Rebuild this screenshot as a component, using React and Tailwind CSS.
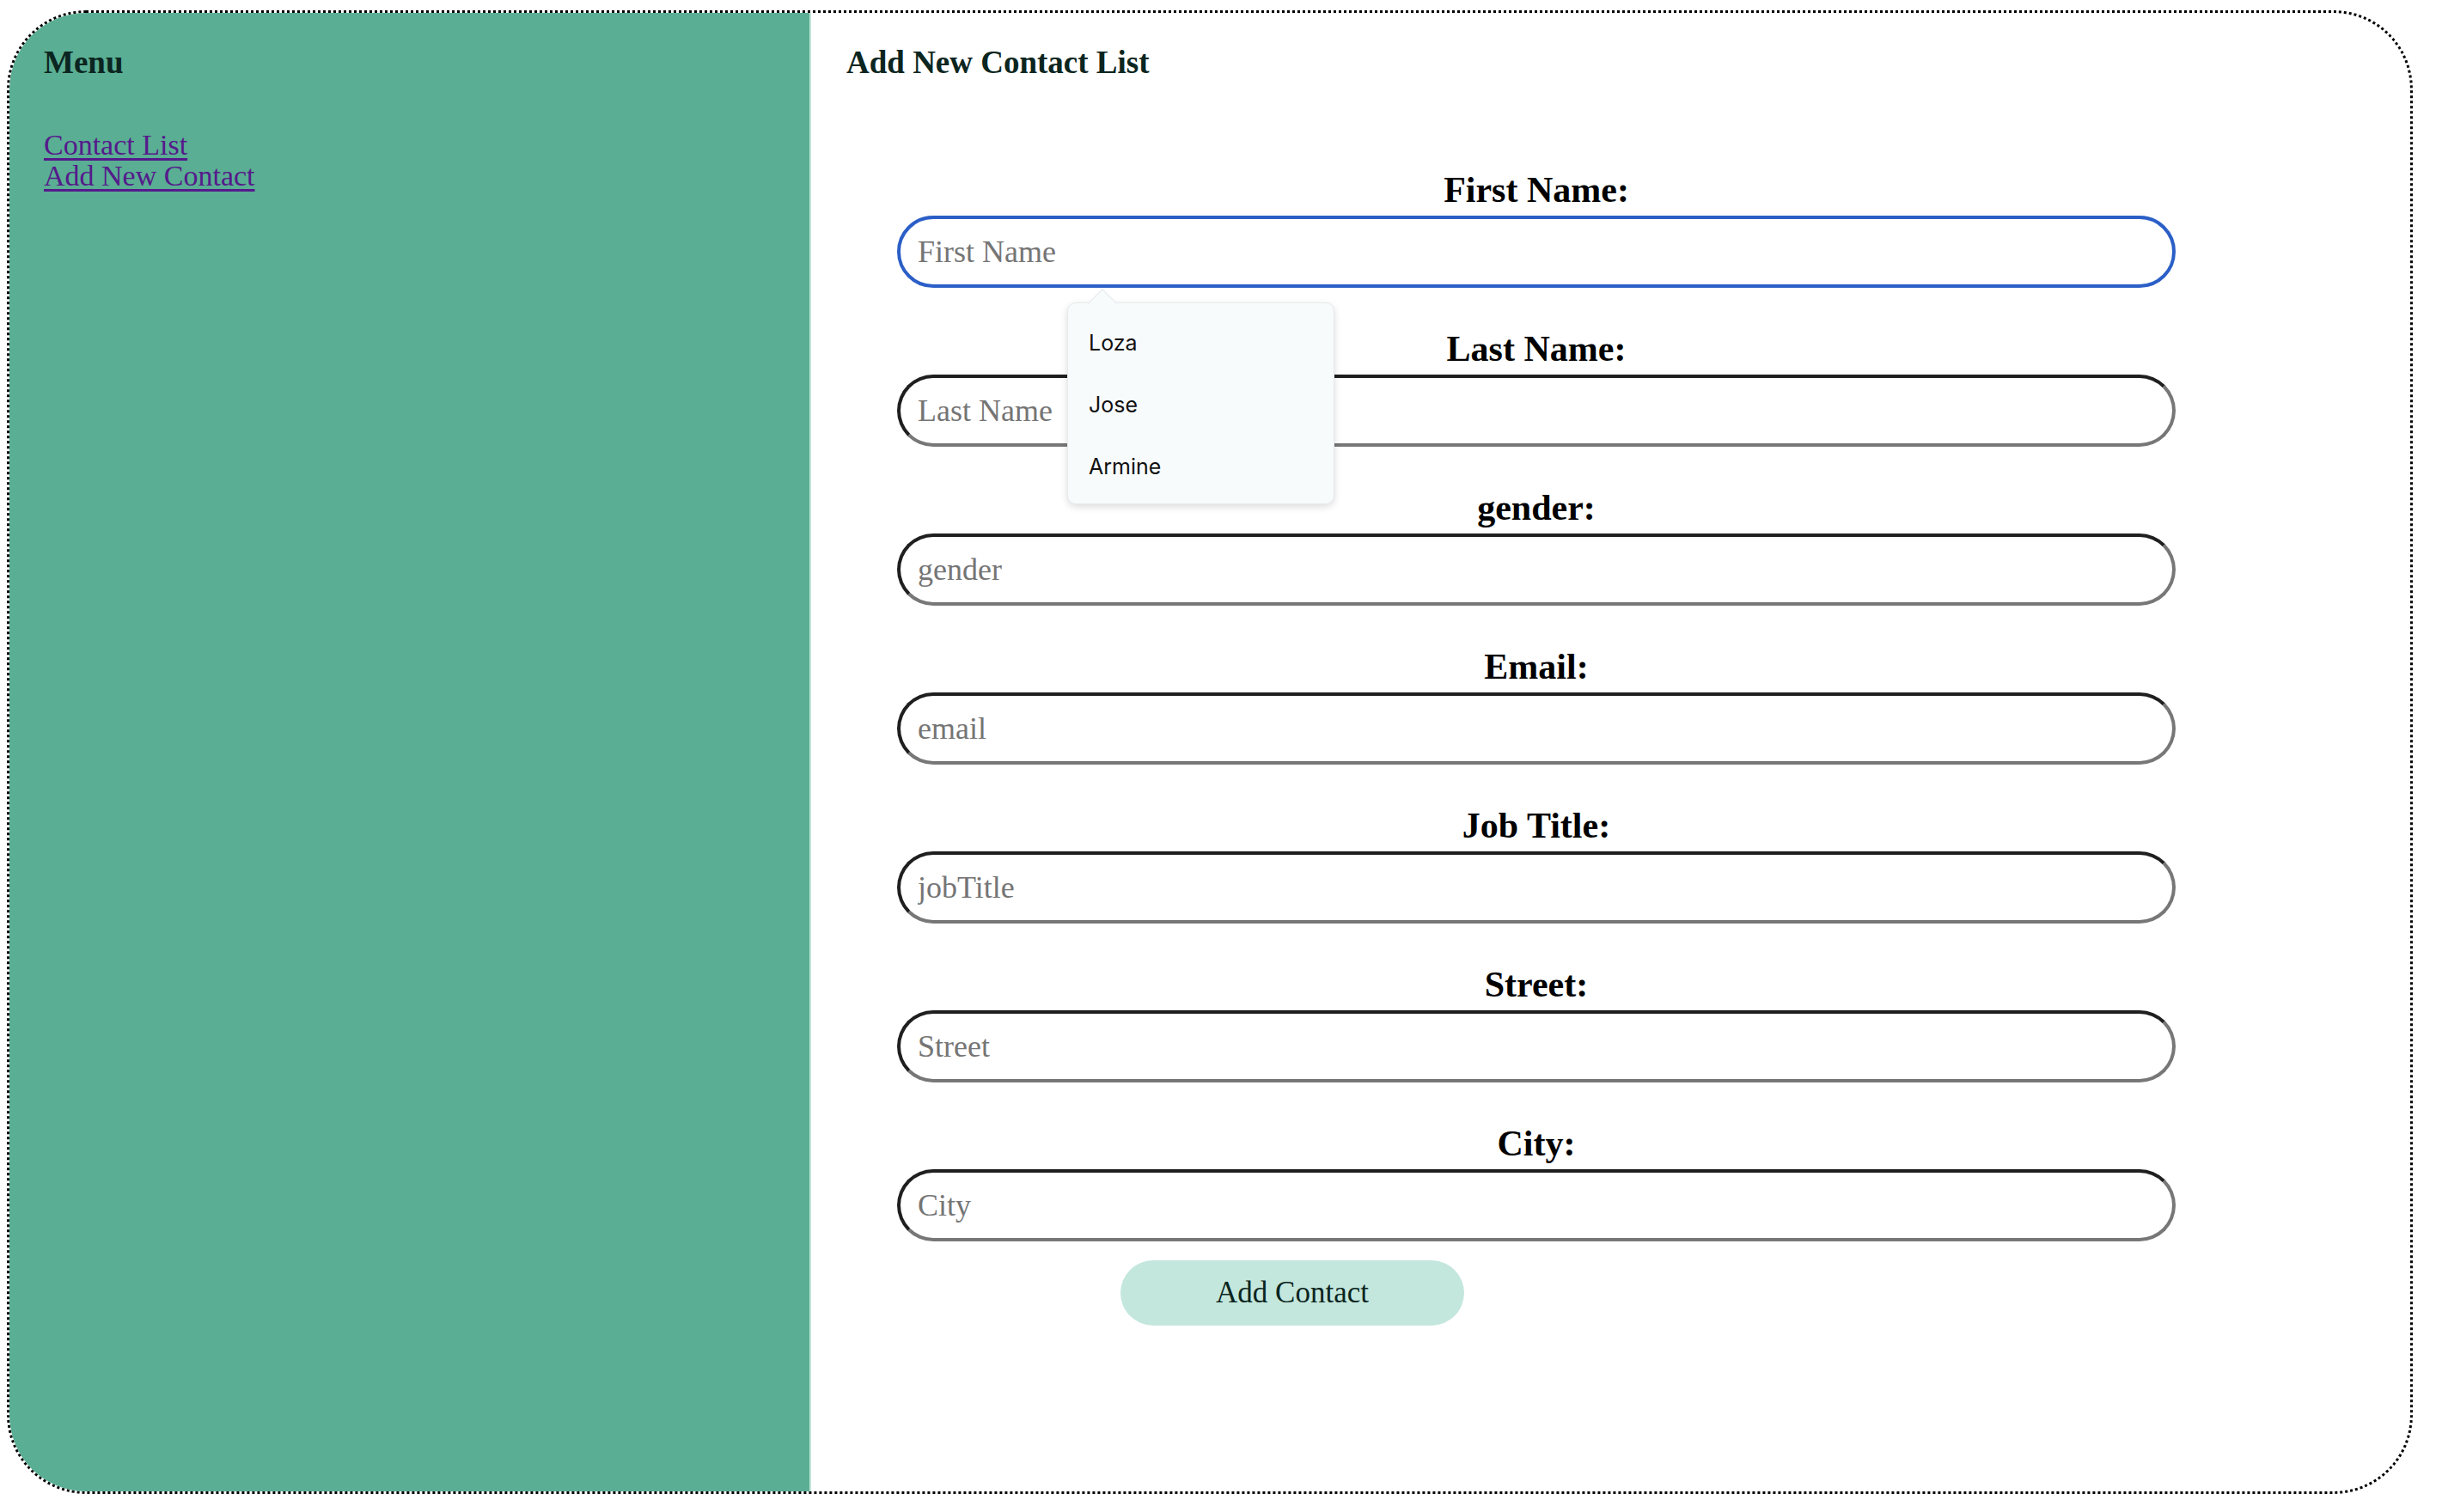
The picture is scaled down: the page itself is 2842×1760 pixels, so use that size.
import React from "react";

const fields = [
  { label: "First Name:", ph: "First Name", focused: true },
  { label: "Last Name:", ph: "Last Name" },
  { label: "gender:", ph: "gender" },
  { label: "Email:", ph: "email" },
  { label: "Job Title:", ph: "jobTitle" },
  { label: "Street:", ph: "Street" },
  { label: "City:", ph: "City" },
];

export default function App() {
  return (
    <div className="bg-white w-[2842px] h-[1760px] pt-[12px] pl-[8px] font-['Liberation_Serif',serif]">
      <div className="w-[2800px] h-[1727px] border-[3px] border-dotted border-black rounded-[92px] overflow-hidden flex">
        {/* Sidebar */}
        <aside className="w-[933px] shrink-0 bg-[#5aae93] border-r-2 border-[#c3e5d9] pl-[40px] pt-[38px]">
          <h3 className="text-[37px] leading-[40px] font-bold text-[#0b2520] m-0">Menu</h3>
          <nav className="mt-[58px] flex flex-col">
            <a href="#" className="text-[34px] leading-[36px] text-[#551a8b] underline decoration-[3px] underline-offset-[4px] w-fit">
              Contact List
            </a>
            <a href="#" className="text-[34px] leading-[36px] text-[#551a8b] underline decoration-[3px] underline-offset-[4px] w-fit">
              Add New Contact
            </a>
          </nav>
        </aside>

        {/* Main */}
        <main className="flex-1 pl-[41px] pt-[38px]">
          <h3 className="text-[37px] leading-[40px] font-bold text-[#0b2520] m-0">Add New Contact List</h3>
          <form className="relative ml-[59px] mt-[106px] w-[1488px] flex flex-col">
            {fields.map((f, i) => (
              <div key={f.label} className={i === 0 ? "flex flex-col" : "flex flex-col mt-[49px]"}>
                <label className="text-center text-[42px] leading-[44px] font-bold text-black">{f.label}</label>
                <input
                  type="text"
                  placeholder={f.ph}
                  className={
                    f.focused
                      ? "mt-[8px] h-[84px] w-full rounded-full border-4 border-[#2b5fc7] bg-white pl-[20px] text-[36px] text-black placeholder:text-[#757575] outline-none font-['Liberation_Serif',serif]"
                      : "mt-[8px] h-[84px] w-full rounded-full border-4 border-t-[#1f1f1f] border-l-[#1f1f1f] border-b-[#777777] border-r-[#777777] bg-white pl-[20px] text-[36px] text-black placeholder:text-[#757575] outline-none font-['Liberation_Serif',serif]"
                  }
                />
              </div>
            ))}
            <button
              type="button"
              className="mt-[22px] ml-[260px] w-[400px] h-[76px] rounded-full bg-[#c4e7dd] text-[35px] text-[#0b2520] font-['Liberation_Serif',serif]"
            >
              Add Contact
            </button>

            {/* Autocomplete popup */}
            <div className="absolute left-[198px] top-[153px] w-[311px] rounded-[10px] bg-[#f8fbfc] border border-[#e6eaec] shadow-[0_3px_8px_rgba(0,0,0,0.14)] pt-[10px] pb-[7px] pl-[24px] font-['Inter',sans-serif] text-[25px] leading-[72px] text-[#111]">
              <div className="absolute left-[28px] -top-[12px] w-[24px] h-[24px] rotate-45 bg-[#f8fbfc] border-t border-l border-[#e6eaec]" />
              <div className="relative">Loza</div>
              <div className="relative">Jose</div>
              <div className="relative">Armine</div>
            </div>
          </form>
        </main>
      </div>
    </div>
  );
}
